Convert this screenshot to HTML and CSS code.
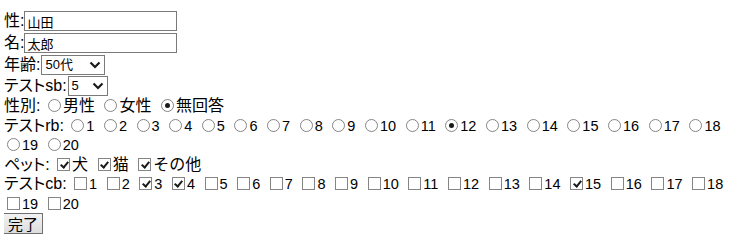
FILE: index.html
```html
<!DOCTYPE html>
<html lang="ja">
<head>
<meta charset="utf-8">
<title>フォーム</title>
<link rel="stylesheet" href="styles.css">
</head>
<body>
<form class="form">
  <div class="field f1"><label class="lbl">性:</label><input class="text" type="text" value="山田"></div>
  <div class="field f2"><label class="lbl">名:</label><input class="text" type="text" value="太郎"></div>
  <div class="field f3"><label class="lbl">年齢:</label><span class="sel sel-age"><select><option>50代</option></select><svg class="chev" viewBox="0 0 12 8"><path d="M1.5 1.5 L6 6 L10.5 1.5" /></svg></span></div>
  <div class="field f4"><label class="lbl">テストsb:</label><span class="sel sel-sb"><select><option>5</option></select><svg class="chev" viewBox="0 0 12 8"><path d="M1.5 1.5 L6 6 L10.5 1.5" /></svg></span></div>
  <div class="row"><span class="lbl">性別:</span> <label class="opt"><input type="radio" name="sex">男性</label> <label class="opt"><input type="radio" name="sex">女性</label> <label class="opt"><input type="radio" name="sex" checked>無回答</label></div>
  <div class="row"><span class="lbl">テストrb:</span> <label class="opt"><input type="radio" name="rb"><span class="n">1</span></label> <label class="opt"><input type="radio" name="rb"><span class="n">2</span></label> <label class="opt"><input type="radio" name="rb"><span class="n">3</span></label> <label class="opt"><input type="radio" name="rb"><span class="n">4</span></label> <label class="opt"><input type="radio" name="rb"><span class="n">5</span></label> <label class="opt"><input type="radio" name="rb"><span class="n">6</span></label> <label class="opt"><input type="radio" name="rb"><span class="n">7</span></label> <label class="opt"><input type="radio" name="rb"><span class="n">8</span></label> <label class="opt"><input type="radio" name="rb"><span class="n">9</span></label> <label class="opt"><input type="radio" name="rb"><span class="n">10</span></label> <label class="opt"><input type="radio" name="rb"><span class="n">11</span></label> <label class="opt"><input type="radio" name="rb" checked><span class="n">12</span></label> <label class="opt"><input type="radio" name="rb"><span class="n">13</span></label> <label class="opt"><input type="radio" name="rb"><span class="n">14</span></label> <label class="opt"><input type="radio" name="rb"><span class="n">15</span></label> <label class="opt"><input type="radio" name="rb"><span class="n">16</span></label> <label class="opt"><input type="radio" name="rb"><span class="n">17</span></label> <label class="opt"><input type="radio" name="rb"><span class="n">18</span></label> <label class="opt"><input type="radio" name="rb"><span class="n">19</span></label> <label class="opt"><input type="radio" name="rb"><span class="n">20</span></label></div>
  <div class="row"><span class="lbl">ペット:</span> <label class="opt"><input type="checkbox" checked>犬</label> <label class="opt"><input type="checkbox" checked>猫</label> <label class="opt"><input type="checkbox" checked>その他</label></div>
  <div class="row"><span class="lbl">テストcb:</span> <label class="opt"><input type="checkbox"><span class="n">1</span></label> <label class="opt"><input type="checkbox"><span class="n">2</span></label> <label class="opt"><input type="checkbox" checked><span class="n">3</span></label> <label class="opt"><input type="checkbox" checked><span class="n">4</span></label> <label class="opt"><input type="checkbox"><span class="n">5</span></label> <label class="opt"><input type="checkbox"><span class="n">6</span></label> <label class="opt"><input type="checkbox"><span class="n">7</span></label> <label class="opt"><input type="checkbox"><span class="n">8</span></label> <label class="opt"><input type="checkbox"><span class="n">9</span></label> <label class="opt"><input type="checkbox"><span class="n">10</span></label> <label class="opt"><input type="checkbox"><span class="n">11</span></label> <label class="opt"><input type="checkbox"><span class="n">12</span></label> <label class="opt"><input type="checkbox"><span class="n">13</span></label> <label class="opt"><input type="checkbox"><span class="n">14</span></label> <label class="opt"><input type="checkbox" checked><span class="n">15</span></label> <label class="opt"><input type="checkbox"><span class="n">16</span></label> <label class="opt"><input type="checkbox"><span class="n">17</span></label> <label class="opt"><input type="checkbox"><span class="n">18</span></label> <label class="opt"><input type="checkbox"><span class="n">19</span></label> <label class="opt"><input type="checkbox"><span class="n">20</span></label></div>
  <div class="actions"><button class="btn" type="submit">完了</button></div>
</form>
</body>
</html>
```
FILE: styles.css
```css
html, body {
  background: #fff;
}
body {
  margin: 10px 4px 0 4px;
  font-family: "Liberation Sans", "Noto Sans CJK JP", sans-serif;
  font-size: 16px;
  line-height: 20px;
  color: #000;
}
.form {
  margin: 0;
}
.lbl {
  font-feature-settings: "palt";
}
.field {
  display: flex;
  align-items: center;
  height: 21px;
}
.f1, .f2 {
  height: 22px;
}
.text {
  box-sizing: border-box;
  width: 153px;
  height: 20px;
  margin: 0;
  padding: 0 2px;
  border: 1px solid #7a7a7a;
  border-radius: 0;
  font-family: "Noto Sans CJK JP", sans-serif;
  font-size: 13px;
  color: #000;
  outline: none;
}
.sel {
  position: relative;
  display: block;
  height: 20px;
  margin-left: 1px;
}
.sel select {
  appearance: none;
  -webkit-appearance: none;
  display: block;
  box-sizing: border-box;
  height: 20px;
  margin: 0;
  padding: 0 0 0 3px;
  border: 1px solid #7a7a7a;
  border-radius: 0;
  background: #fff;
  font-family: "Liberation Sans", "Noto Sans CJK JP", sans-serif;
  font-size: 13px;
  color: #000;
  outline: none;
}
.sel-age select {
  width: 64px;
}
.sel-sb select {
  width: 40px;
}
.chev {
  position: absolute;
  right: 4px;
  top: 6px;
  width: 12px;
  height: 8px;
  pointer-events: none;
}
.chev path {
  fill: none;
  stroke: #1a1a1a;
  stroke-width: 2.2;
}
.row {
  line-height: 19.5px;
}
.row .lbl,
.opt {
  line-height: 14px;
}
.opt {
  white-space: nowrap;
  margin-right: 2.1px;
}
.n {
  font-size: 14.5px;
  line-height: 14px;
}
.opt input {
  appearance: none;
  -webkit-appearance: none;
  position: relative;
  box-sizing: border-box;
  width: 13px;
  height: 13px;
  margin: 0 2px 0 3px;
  vertical-align: -1px;
  border: 1px solid #858585;
  background: #fff;
}
.opt input[type="radio"] {
  border-radius: 50%;
}
.opt input[type="radio"]:checked::after {
  content: "";
  position: absolute;
  left: 3px;
  top: 3px;
  width: 5px;
  height: 5px;
  border-radius: 50%;
  background: #1a1a1a;
}
.opt input[type="checkbox"]:checked::after {
  content: "";
  position: absolute;
  left: 3.5px;
  top: 1px;
  width: 3px;
  height: 6px;
  border-right: 2px solid #1a1a1a;
  border-bottom: 2px solid #1a1a1a;
  transform: rotate(40deg);
}
.actions {
  margin-left: -1px;
}
.btn {
  display: block;
  box-sizing: border-box;
  width: 40px;
  height: 21px;
  margin: 0;
  padding: 0;
  border: 1px solid #707070;
  border-radius: 0;
  background: linear-gradient(#f2f2f2, #dddddd);
  font-family: "Noto Sans CJK JP", sans-serif;
  font-size: 15px;
  line-height: 18px;
  color: #000;
}
```
